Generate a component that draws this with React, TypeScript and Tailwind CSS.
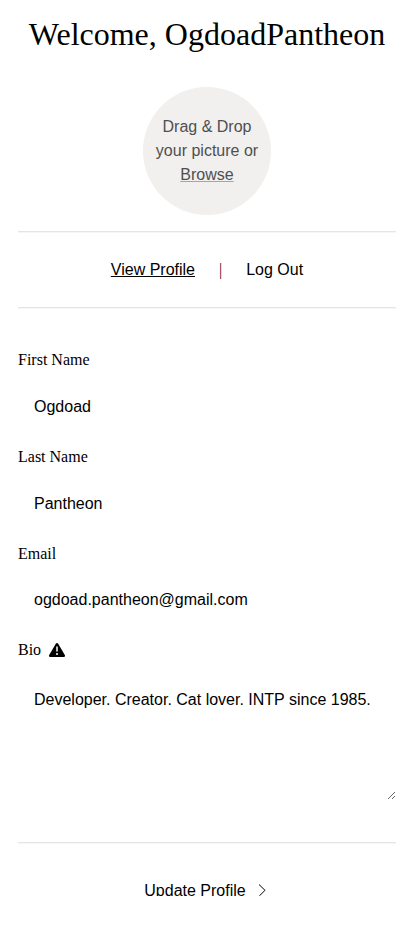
import React from 'react';

function Field({ label, value }: { label: string; value: string }) {
  return (
    <label className="block h-[96.8px]">
      <span className="block font-['Liberation_Serif',serif] leading-[18px]">{label}</span>
      <input
        className="mt-[8.8px] block h-[58px] w-full bg-transparent px-4 outline-none"
        defaultValue={value}
      />
    </label>
  );
}

function Divider() {
  return <hr className="h-0.5 border-t border-[#e5e5e5] bg-[#f6f6f6]" />;
}

export default function App() {
  return (
    <main className="h-[929px] overflow-hidden bg-white px-[18px] font-['Liberation_Sans',sans-serif] text-base text-black">
      <h1 className="-mx-[18px] pt-4 text-center font-['Liberation_Serif',serif] text-[32px] leading-[37px]">
        Welcome, OgdoadPantheon
      </h1>
      <div className="mx-auto mt-[34px] mb-4 flex h-32 w-32 items-center justify-center rounded-full bg-[#f1f0ef] text-center leading-6 text-[#4f4f4f]">
        <p>
          Drag &amp; Drop
          <br />
          your picture or
          <br />
          <span className="underline decoration-[#a7a6a6]">Browse</span>
        </p>
      </div>
      <Divider />
      <nav className="flex h-[74px] items-center justify-center pb-px">
        <a className="underline">View Profile</a>
        <span className="mx-6 font-['Liberation_Serif',serif] text-[#40000c]">|</span>
        <a>Log Out</a>
      </nav>
      <Divider />
      <form className="pt-[42px]">
        <Field label="First Name" value="Ogdoad" />
        <Field label="Last Name" value="Pantheon" />
        <Field label="Email" value="ogdoad.pantheon@gmail.com" />
        <div className="flex h-[18px] items-center gap-2 font-['Liberation_Serif',serif]">
          Bio
          <svg className="h-4 w-4" viewBox="0 0 16 16">
            <path d="M8 1c.5 0 .9.3 1.200.7l6.600 11.200c.6 1-.1 2.200-1.200 2.200H1.400c-1.100 0-1.800-1.200-1.200-2.200L6.800 1.700C7.100 1.300 7.500 1 8 1z" />
            <path d="M8 5v4" stroke="white" strokeWidth="1.500" strokeLinecap="round" />
            <circle cx="8" cy="12" r="1" fill="white" />
          </svg>
        </div>
        <textarea
          className="mt-4 mb-[42px] block h-[125px] w-full resize-y bg-transparent px-4 py-4 leading-[18px] outline-none"
          defaultValue="Developer. Creator. Cat lover. INTP since 1985."
        />
        <Divider />
        <button
          type="button"
          className="mx-auto mt-[37px] flex h-[15px] items-start gap-[11px] overflow-hidden pr-px leading-5"
        >
          Update Profile
          <svg className="mt-[3px] h-3 w-3" viewBox="0 0 12 12" fill="none" stroke="black">
            <path d="M2 .5 8 6.300 2.500 11.800" />
          </svg>
        </button>
      </form>
    </main>
  );
}
